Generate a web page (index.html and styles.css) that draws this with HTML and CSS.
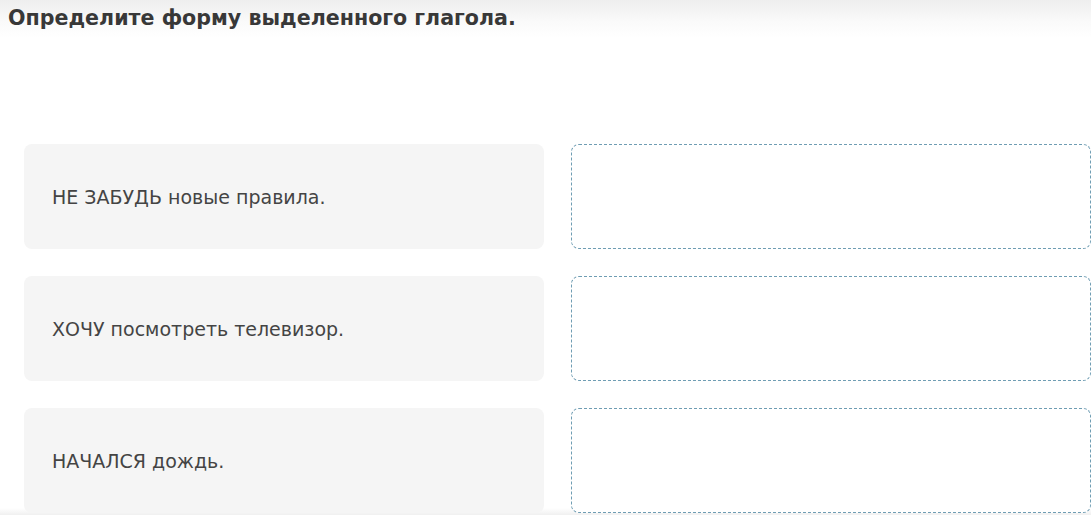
FILE: index.html
```html
<!DOCTYPE html>
<html lang="ru">
<head>
<meta charset="utf-8">
<link rel="stylesheet" href="styles.css">
</head>
<body>
<div class="page">
  <h1 class="title">Определите форму выделенного глагола.</h1>
  <div class="rows">
    <div class="row">
      <div class="card">НЕ ЗАБУДЬ новые правила.</div>
      <div class="drop"></div>
    </div>
    <div class="row">
      <div class="card">ХОЧУ посмотреть телевизор.</div>
      <div class="drop"></div>
    </div>
    <div class="row">
      <div class="card">НАЧАЛСЯ дождь.</div>
      <div class="drop"></div>
    </div>
  </div>
</div>
</body>
</html>
```

FILE: styles.css
```css
html, body {
  margin: 0;
  padding: 0;
  width: 1091px;
  height: 515px;
  overflow: hidden;
  background: #fff;
}
.page {
  height: 515px;
  box-sizing: border-box;
  background: linear-gradient(to bottom, #eeeeee 0px, #fafafa 22px, #ffffff 38px, #ffffff 508px, #f0f0f0 515px);
  font-family: "DejaVu Sans", "Noto Sans", sans-serif;
  color: #3c3c3c;
}
.title {
  margin: 0;
  padding: 4px 0 0 8px;
  font-size: 20.6px;
  line-height: 28px;
  font-weight: 700;
  color: #383838;
}
.rows {
  display: flex;
  flex-direction: column;
  gap: 27px;
  padding: 112px 0 0 24px;
}
.row {
  display: flex;
  gap: 27px;
  height: 105px;
}
.card {
  width: 520px;
  box-sizing: border-box;
  background: #f5f5f5;
  border-radius: 8px;
  padding: 0 28px;
  display: flex;
  align-items: center;
  font-size: 19px;
  color: #444;
}
.drop {
  width: 520px;
  box-sizing: border-box;
  border: 1px dashed #6f9db3;
  border-radius: 8px;
  background: #fff;
}
```
